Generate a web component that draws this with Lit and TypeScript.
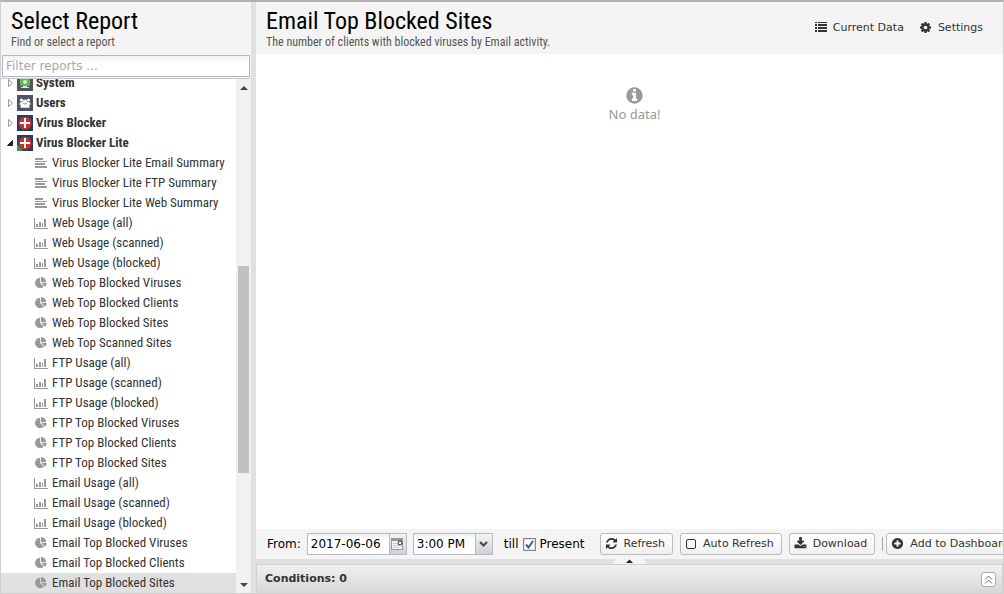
import { LitElement, html, css, svg } from "lit";
import { customElement, property, state } from "lit/decorators.js";
import { classMap } from "lit/directives/class-map.js";

const paths: Record<string, string> = {
  refresh:
    "M1639 1056q0 5-1 7-64 268-268 434.5t-478 166.5q-146 0-282.5-55t-243.5-157l-129 129q-19 19-45 19t-45-19-19-45v-448q0-26 19-45t45-19h448q26 0 45 19t19 45-19 45l-137 137q71 66 161 102t187 36q134 0 250-65t186-179q11-17 53-117 8-23 30-23h192q13 0 22.5 9.5t9.5 22.5zm25-800v448q0 26-19 45t-45 19h-448q-26 0-45-19t-19-45 19-45l138-138q-148-137-349-137-134 0-250 65t-186 179q-11 17-53 117-8 23-30 23h-199q-13 0-22.5-9.5t-9.5-22.5v-7q65-268 270-434.5t480-166.5q146 0 284 55.5t245 156.5l130-129q19-19 45-19t45 19 19 45z",
  download:
    "M1344 1344q0-26-19-45t-45-19-45 19-19 45 19 45 45 19 45-19 19-45zm256 0q0-26-19-45t-45-19-45 19-19 45 19 45 45 19 45-19 19-45zm128-224v320q0 40-28 68t-68 28h-1472q-40 0-68-28t-28-68v-320q0-40 28-68t68-28h465l135 136q58 56 136 56t136-56l136-136h464q40 0 68 28t28 68zm-325-569q17 41-14 70l-448 448q-18 19-45 19t-45-19l-448-448q-31-29-14-70 17-39 59-39h256v-448q0-26 19-45t45-19h256q26 0 45 19t19 45v448h256q42 0 59 39z",
  plus:
    "M1344 960v-128q0-26-19-45t-45-19h-256v-256q0-26-19-45t-45-19h-128q-26 0-45 19t-19 45v256h-256q-26 0-45 19t-19 45v128q0 26 19 45t45 19h256v256q0 26 19 45t45 19h128q26 0 45-19t19-45v-256h256q26 0 45-19t19-45zm320-64q0 209-103 385.5t-279.5 279.5-385.5 103-385.5-103-279.5-279.5-103-385.5 103-385.5 279.5-279.5 385.5-103 385.5 103 279.5 279.5 103 385.5z",
  info:
    "M1152 1376v-160q0-14-9-23t-23-9h-96v-512q0-14-9-23t-23-9h-320q-14 0-23 9t-9 23v160q0 14 9 23t23 9h96v320h-96q-14 0-23 9t-9 23v160q0 14 9 23t23 9h448q14 0 23-9t9-23zm-128-896v-160q0-14-9-23t-23-9h-192q-14 0-23 9t-9 23v160q0 14 9 23t23 9h192q14 0 23-9t9-23zm640 416q0 209-103 385.5t-279.5 279.5-385.5 103-385.5-103-279.5-279.5-103-385.5 103-385.5 279.5-279.5 385.5-103 385.5 103 279.5 279.5 103 385.5z",
  cog:
    "M1152 896q0-106-75-181t-181-75-181 75-75 181 75 181 181 75 181-75 75-181zm512-109v222q0 12-8 23t-20 13l-185 28q-19 54-39 91 35 50 107 138 10 12 10 25t-9 23q-27 37-99 108t-94 71q-12 0-26-9l-138-108q-44 23-91 38-16 136-29 186-7 28-36 28h-222q-14 0-24.5-8.5t-11.5-21.5l-28-184q-49-16-90-37l-141 107q-10 9-25 9-14 0-25-11-126-114-165-168-7-10-7-23 0-12 8-23 15-21 51-66.5t54-70.5q-27-50-41-99l-183-27q-13-2-21-12.5t-8-23.5v-222q0-12 8-23t19-13l186-28q14-46 39-92-40-57-107-138-10-12-10-24 0-10 9-23 26-36 98.5-107.5t94.5-71.5q13 0 26 10l138 107q44-23 91-38 16-136 29-186 7-28 36-28h222q14 0 24.5 8.5t11.5 21.5l28 184q49 16 90 37l142-107q9-9 24-9 13 0 25 10 129 119 165 170 7 8 7 22 0 12-8 23-15 21-51 66.5t-54 70.5q26 50 41 98l183 28q13 2 21 12.5t8 23.5z",
  pie:
    "M768 890l546 546q-106 108-247.5 168t-298.5 60q-209 0-385.5-103t-279.5-279.5-103-385.5 103-385.5 279.5-279.5 385.5-103v762zm187 6h773q0 157-60 298.5t-168 247.5zm709-128h-768v-768q209 0 385.5 103t279.5 279.5 103 385.5z",
};

const glyph = (name: string, size: number) => html`
  <svg width=${size} height=${size} viewBox="0 0 1792 1792" fill="currentColor" aria-hidden="true">
    <path d=${paths[name]}></path>
  </svg>
`;

const textLines = html`
  <svg width="14" height="12" viewBox="0 0 14 12" fill="currentColor" aria-hidden="true">
    <path d="M1 1h8v2H1zM1 4h12v1H1zM1 6h10v1H1zM1 7h10v1H1zM1 9h12v2H1z"></path>
  </svg>
`;

const barChart = html`
  <svg width="14" height="12" viewBox="0 0 14 12" fill="currentColor" aria-hidden="true">
    <path d="M0 1h1v10h13v1H0zM2 7h2v3H2zM5 5h2v5H5zM8 6h1v4H8zM10 2h2v8h-2z"></path>
  </svg>
`;

const listIcon = html`
  <svg width="12" height="10" viewBox="0 0 12 10" fill="currentColor" aria-hidden="true">
    <path d="M0 0h2v1H0zM3 0h9v1H3zM0 2h2v2H0zM3 2h9v2H3zM0 5h2v2H0zM3 5h9v2H3zM0 8h2v2H0zM3 8h9v2H3z"></path>
  </svg>
`;

const appIcon = (kind: string) => {
  const system = svg`
    <rect width="16" height="16" fill="#4c5468"></rect>
    <rect x="3" y="2" width="10" height="9" rx="1" fill="#62b946"></rect>
    <circle cx="8" cy="7" r="2" fill="#d9f0d0"></circle>
    <path d="M6 11h4v1h2v1H4v-1h2z" fill="#dfe6e0"></path>`;
  const users = svg`
    <rect width="16" height="16" fill="#4c5468"></rect>
    <g fill="#fff">
      <circle cx="4.500" cy="5" r="1.600"></circle><circle cx="11.500" cy="5" r="1.600"></circle>
      <circle cx="8" cy="6.600" r="2.200"></circle>
      <path d="M2.500 9q0-2 2-2h1.400q0 1.600 1 2.200h2.200q1-.6 1-2.200h1.400q2 0 2 2v.8h-1.600q.8 1 .6 3h-9q-.2-2 .6-3H2.500z"></path>
    </g>`;
  const blocker = svg`
    <rect width="16" height="16" fill="#1f3f66"></rect>
    <circle cx="8" cy="8" r="6.600" fill="#c9302c"></circle>
    <path d="M7 3h2v4h4v2H9v4H7V9H3V7h4z" fill="#fff"></path>`;
  const leaf = svg`<path d="M0 10q2 0 3 2.500q2 .5 3 3.500H0z" fill="#2f9a63"></path>`;
  return html`
    <svg width="16" height="16" viewBox="0 0 16 16" aria-hidden="true">
      ${kind === "system" ? system : kind === "users" ? users : blocker}
      ${kind === "lite" ? leaf : null}
    </svg>
  `;
};

type Kind = "text" | "bars" | "pie";
interface Report {
  name: string;
  kind: Kind;
}
interface Group {
  name: string;
  icon: string;
  reports?: Report[];
}

const group = (kind: Kind, prefix: string, names: string[]): Report[] =>
  names.map((n) => ({ kind, name: `${prefix} ${n}` }));

const usage = ["(all)", "(scanned)", "(blocked)"];
const groups: Group[] = [
  { name: "System", icon: "system" },
  { name: "Users", icon: "users" },
  { name: "Virus Blocker", icon: "blocker" },
  {
    name: "Virus Blocker Lite",
    icon: "lite",
    reports: [
      ...group("text", "Virus Blocker Lite", ["Email Summary", "FTP Summary", "Web Summary"]),
      ...group("bars", "Web Usage", usage),
      ...group("pie", "Web Top", ["Blocked Viruses", "Blocked Clients", "Blocked Sites", "Scanned Sites"]),
      ...group("bars", "FTP Usage", usage),
      ...group("pie", "FTP Top", ["Blocked Viruses", "Blocked Clients", "Blocked Sites"]),
      ...group("bars", "Email Usage", usage),
      ...group("pie", "Email Top", ["Blocked Viruses", "Blocked Clients", "Blocked Sites"]),
    ],
  },
];

const shared = css`
  * {
    box-sizing: border-box;
  }
  svg {
    display: block;
    flex: none;
  }
  button,
  input,
  select {
    font: inherit;
    color: inherit;
    margin: 0;
  }
  .panel-header {
    flex: none;
    height: 52px;
    background: #f4f4f4;
    padding: 5px 10px 0;
    font-family: "Roboto Condensed", "Liberation Sans Narrow", Roboto, sans-serif;
  }
  .title {
    margin: 0;
    font-size: 24px;
    line-height: 28px;
    font-weight: 400;
    color: #000;
    white-space: nowrap;
  }
  .subtitle {
    margin: 0;
    font-size: 12px;
    line-height: 14px;
    color: #555;
    white-space: nowrap;
  }
`;

@customElement("report-tree")
class ReportTree extends LitElement {
  @property() selected = "";

  static styles = [
    shared,
    css`
      :host {
        display: flex;
        flex-direction: column;
        min-height: 0;
        background: #fff;
      }
      .filter {
        flex: none;
        padding: 1px 1px 0;
        background: #f4f4f4;
        border-bottom: 1px solid #c8c8c8;
        height: 25px;
      }
      .filter-input {
        display: block;
        width: 100%;
        height: 22px;
        padding: 0 3px;
        border: 1px solid #b5b8c8;
        border-radius: 0;
        background: linear-gradient(#eef2f4, #fff 6px);
        outline: none;
        font-size: 12px;
      }
      .filter-input::placeholder {
        color: #a8a8a8;
        opacity: 1;
      }
      .body {
        flex: 1;
        min-height: 0;
        display: flex;
      }
      .list {
        flex: 1;
        min-width: 0;
        margin: 0;
        padding: 0;
        list-style: none;
        display: flex;
        flex-direction: column;
        justify-content: flex-end;
        overflow: hidden;
        font-family: "Roboto Condensed", "Liberation Sans Narrow", Roboto, sans-serif;
        font-size: 13px;
        color: #333;
      }
      .item {
        flex: none;
      }
      .row {
        display: flex;
        align-items: center;
        width: 100%;
        height: 20px;
        padding: 0 0 0 4px;
        border: 0;
        background: none;
        text-align: left;
        white-space: nowrap;
        cursor: pointer;
      }
      .name {
        padding-bottom: 2px;
      }
      .branch {
        font-weight: 700;
        gap: 3px;
      }
      .leaf {
        padding-left: 33px;
        gap: 4px;
      }
      .leaf-icon {
        display: flex;
        justify-content: center;
        width: 14px;
        color: #999;
      }
      .selected {
        background: #e0e0e0;
      }
      .nested {
        margin: 0;
        padding: 0;
        list-style: none;
      }
      .scroll {
        flex: none;
        width: 15px;
        background: #f1f1f1;
        display: grid;
        grid-template-rows: 17px 170fr 207fr 103fr 17px;
        justify-items: center;
        align-items: center;
      }
      .arrow-down {
        grid-row: 5;
      }
      .thumb {
        grid-row: 3;
        width: 11px;
        height: 100%;
        background: #c1c1c1;
      }
    `,
  ];

  private icon(kind: Kind) {
    return kind === "text" ? textLines : kind === "bars" ? barChart : glyph("pie", 12);
  }

  private pick(name: string) {
    this.dispatchEvent(new CustomEvent("pick", { detail: name }));
  }

  render() {
    return html`
      <header class="panel-header">
        <h2 class="title">Select Report</h2>
        <p class="subtitle">Find or select a report</p>
      </header>
      <div class="filter">
        <input class="filter-input" type="text" placeholder="Filter reports ..." aria-label="Filter reports" />
      </div>
      <div class="body">
        <ul class="list">
          ${groups.map(
            (g) => html`
              <li class="item">
                <button class="row branch" aria-expanded=${g.reports ? "true" : "false"}>
                  <svg width="9" height="10" viewBox="0 0 9 10" aria-hidden="true">
                    ${g.reports
                      ? svg`<path d="M7.500 2.500v5h-5z" fill="#222" stroke="#222"></path>`
                      : svg`<path d="M3.500 1.500v7l4-3.500z" fill="#fff" stroke="#999"></path>`}
                  </svg>
                  ${appIcon(g.icon)}
                  <span class="name">${g.name}</span>
                </button>
                ${g.reports
                  ? html`<ul class="nested">
                      ${g.reports.map(
                        (r) => html`<li>
                          <button
                            class=${classMap({ row: true, leaf: true, selected: r.name === this.selected })}
                            @click=${() => this.pick(r.name)}
                          >
                            <span class="leaf-icon">${this.icon(r.kind)}</span>
                            <span class="name">${r.name}</span>
                          </button>
                        </li>`,
                      )}
                    </ul>`
                  : null}
              </li>
            `,
          )}
        </ul>
        <div class="scroll" aria-hidden="true">
          <svg width="8" height="4" viewBox="0 0 8 4"><path d="M0 4l4-4 4 4z" fill="#444"></path></svg>
          <div class="thumb"></div>
          <svg class="arrow-down" width="8" height="4" viewBox="0 0 8 4"><path d="M0 0h8L4 4z" fill="#444"></path></svg>
        </div>
      </div>
    `;
  }
}

@customElement("report-toolbar")
class ReportToolbar extends LitElement {
  static styles = [
    shared,
    css`
      :host {
        display: flex;
        align-items: center;
        height: 30px;
        padding-left: 11px;
        background: #f4f4f4;
        overflow: hidden;
        white-space: nowrap;
        font-size: 12px;
        color: #000;
      }
      .field {
        flex: none;
        display: flex;
        height: 22px;
        margin-left: 6px;
        border: 1px solid #b5b8c8;
        background: linear-gradient(#eef2f4, #fff 6px);
      }
      .date {
        width: 81px;
        padding: 0 3px;
        border: 0;
        background: none;
        outline: none;
      }
      .trigger {
        display: grid;
        place-items: center;
        width: 17px;
        padding: 0;
        border: 0;
        border-left: 1px solid #b5b8c8;
        background: linear-gradient(#f4f4f4, #d0d0d0);
      }
      .time {
        display: grid;
        grid-template-columns: 61px 17px;
      }
      .time-select {
        grid-area: 1 / 1 / 2 / 3;
        appearance: none;
        border: 0;
        border-radius: 0;
        padding: 0 3px;
        background: none;
        outline: none;
      }
      .time-trigger {
        grid-area: 1 / 2;
        pointer-events: none;
      }
      .till {
        margin-left: 11px;
      }
      .check {
        flex: none;
        display: flex;
        align-items: center;
        gap: 4px;
        margin: 0 15px 0 4px;
      }
      .tick {
        display: grid;
        place-items: center;
      }
      .tick-input {
        grid-area: 1 / 1;
        appearance: none;
        width: 13px;
        height: 13px;
        border: 1px solid #808590;
        background: #fff;
        box-shadow: inset 0 0 0 1px #dfe1e6;
      }
      .tick-mark {
        grid-area: 1 / 1;
        pointer-events: none;
      }
      .tick-input:not(:checked) + .tick-mark {
        visibility: hidden;
      }
      .button {
        flex: none;
        display: flex;
        align-items: center;
        gap: 6px;
        height: 22px;
        margin-right: 7px;
        padding: 0 7px 1px 4px;
        border: 1px solid #bbb;
        border-radius: 3px;
        background: linear-gradient(#fff, #f8f8f8 50%, #efefef);
        font-size: 11px;
        color: #333;
      }
      .separator {
        flex: none;
        width: 1px;
        height: 14px;
        margin-right: 3px;
        background: #a9a791;
      }
    `,
  ];

  render() {
    return html`
      <label for="from">From:</label>
      <div class="field">
        <input id="from" class="date" type="text" .value=${"2017-06-06"} />
        <button class="trigger" aria-label="Choose date">
          <svg width="13" height="14" viewBox="0 0 13 14" aria-hidden="true">
            <rect x=".5" y="1.500" width="11" height="11" fill="#f5f5f5" stroke="#999"></rect>
            <path d="M1 2h10v2H1z" fill="#999"></path>
            <path d="M2 6h4v1H2zM2 8h6v1H2zM2 10h6v1H2z" fill="#ccc"></path>
            <circle cx="9" cy="6" r="2" fill="#fff" stroke="#222"></circle>
          </svg>
        </button>
      </div>
      <div class="field time">
        <select class="time-select" aria-label="Start time">
          <option>3:00 PM</option>
        </select>
        <span class="trigger time-trigger">
          <svg width="9" height="6" viewBox="0 0 9 6" aria-hidden="true">
            <path d="M1 1l3.500 3.500L8 1" fill="none" stroke="#444" stroke-width="2"></path>
          </svg>
        </span>
      </div>
      <span class="till">till</span>
      <label class="check">
        <span class="tick">
          <input class="tick-input" type="checkbox" checked />
          <svg class="tick-mark" width="9" height="9" viewBox="0 0 9 9" aria-hidden="true">
            <path d="M1 4.500l2.500 3L8 1" fill="none" stroke="#3c5a9a" stroke-width="2"></path>
          </svg>
        </span>
        Present
      </label>
      <button class="button">${glyph("refresh", 13)} Refresh</button>
      <button class="button">
        <svg width="12" height="12" viewBox="0 0 12 12" aria-hidden="true">
          <rect x="1.500" y="1.500" width="9" height="9" rx="1.500" fill="none" stroke="#333"></rect>
        </svg>
        Auto Refresh
      </button>
      <button class="button">${glyph("download", 13)} Download</button>
      <span class="separator"></span>
      <button class="button">${glyph("plus", 13)} Add to Dashboard</button>
    `;
  }
}

@customElement("app-root")
class AppRoot extends LitElement {
  @state() private report = "Email Top Blocked Sites";

  static styles = [
    shared,
    css`
      :host {
        display: flex;
        height: 100vh;
        overflow: hidden;
        box-sizing: border-box;
        border: 1px solid #d0d0d0;
        border-top: 2px solid #b0b0b0;
        background: #e0e0e0;
        font-family: "DejaVu Sans", sans-serif;
      }
      .sidebar {
        flex: none;
        width: 250px;
        margin-right: 5px;
      }
      .main {
        flex: 1;
        min-width: 0;
        display: flex;
        flex-direction: column;
      }
      .main-header {
        display: flex;
        justify-content: space-between;
      }
      .actions {
        display: flex;
        gap: 15px;
        height: 40px;
        padding-right: 10px;
      }
      .action {
        display: flex;
        align-items: center;
        gap: 6px;
        padding: 0;
        border: 0;
        background: none;
        font-family: "DejaVu Sans", sans-serif;
        font-size: 11px;
        color: #333;
        white-space: nowrap;
      }
      .content {
        flex: 1;
        min-height: 0;
        padding-top: 32px;
        background: #fff;
        display: flex;
        flex-direction: column;
        align-items: center;
        color: #999;
        font-family: "Noto Sans", sans-serif;
        font-size: 13px;
        line-height: 18px;
      }
      .empty {
        display: flex;
        flex-direction: column;
        align-items: center;
        margin: 0;
        padding-left: 10px;
      }
      .splitter {
        flex: none;
        display: flex;
        justify-content: center;
        height: 5px;
      }
      .conditions {
        flex: none;
        display: flex;
        align-items: center;
        justify-content: space-between;
        height: 29px;
        padding: 0 6px 0 8px;
        border: 1px solid #d0d0d0;
        border-bottom: 0;
        background: linear-gradient(#f0f0f0, #d7d7d7);
        color: #333;
      }
      .conditions-title {
        margin: 0;
        padding-bottom: 2px;
        font-size: 11px;
        font-weight: 700;
      }
      .expand {
        display: grid;
        place-items: center;
        width: 15px;
        height: 15px;
        padding: 0;
        border: 1px solid #aaa;
        border-radius: 3px;
        background: #fff;
      }
    `,
  ];

  render() {
    return html`
      <report-tree
        class="sidebar"
        .selected=${this.report}
        @pick=${(e: CustomEvent<string>) => (this.report = e.detail)}
      ></report-tree>
      <main class="main">
        <header class="panel-header main-header">
          <div>
            <h1 class="title">${this.report}</h1>
            <p class="subtitle">The number of clients with blocked viruses by Email activity.</p>
          </div>
          <div class="actions">
            <button class="action">${listIcon} Current Data</button>
            <button class="action">${glyph("cog", 13)} Settings</button>
          </div>
        </header>
        <section class="content">
          <p class="empty">${glyph("info", 19)}<span>No data!</span></p>
        </section>
        <report-toolbar></report-toolbar>
        <div class="splitter" aria-hidden="true">
          <svg width="35" height="5" viewBox="0 0 35 5">
            <path d="M0 5l4-5h27l4 5z" fill="#f4f4f4"></path>
            <path d="M14 4l3.500-3.500L21 4z" fill="#222"></path>
          </svg>
        </div>
        <footer class="conditions">
          <h2 class="conditions-title">Conditions: 0</h2>
          <button class="expand" aria-label="Expand conditions">
            <svg width="9" height="9" viewBox="0 0 9 9" aria-hidden="true">
              <path d="M1 4.500l3.500-3.500L8 4.500M1 8.500l3.500-3.500L8 8.500" fill="none" stroke="#666"></path>
            </svg>
          </button>
        </footer>
      </main>
    `;
  }
}
